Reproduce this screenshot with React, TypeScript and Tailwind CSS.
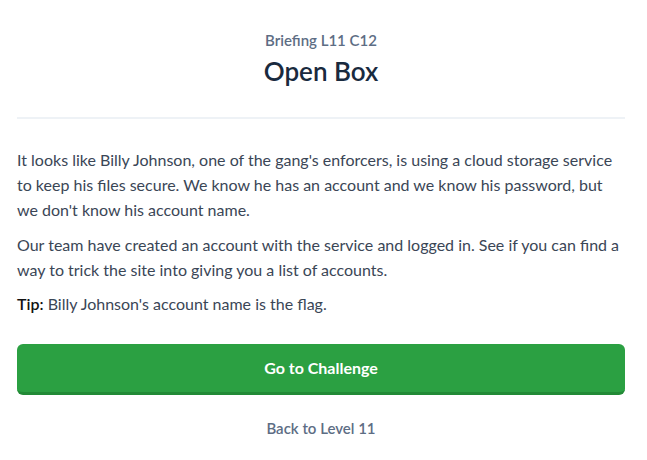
function App() {
  return (
    <div className="min-h-screen bg-white font-['Lato',sans-serif] text-[#3c4858]">
      <div className="pl-[17px] pr-[22px] pt-[30px]">
        <div className="flex flex-col items-center">
          <div className="text-[15px] font-semibold leading-5 text-[#5d6d84]">Briefing L11 C12</div>
          <h1 className="mt-[7px] text-[26px] font-semibold leading-7 text-[#192a3e]">Open Box</h1>
        </div>
        <hr className="mt-[32px] border-0 h-[2px] bg-[#eef2f6]" />

        <div className="mt-[28px] text-[16px] leading-[25px] text-[#3a4656]">
          <p>
            It looks like Billy Johnson, one of the gang's enforcers, is using a cloud storage service to keep his files
            secure. We know he has an account and we know his password, but we don't know his account name.
          </p>
          <p className="mt-[10px]">
            Our team have created an account with the service and logged in. See if you can find a way to trick the
            site into giving you a list of accounts.
          </p>
          <p className="mt-[9px]">
            <span className="font-semibold text-[#111]">Tip:</span> Billy Johnson's account name is the flag.
          </p>
        </div>

        <button className="mt-[28px] flex h-[51px] w-full items-center justify-center rounded-[6px] border-b-[3px] border-[#228a36] bg-[#2ba042] text-[16px] font-bold text-white">
          Go to Challenge
        </button>

        <div className="mt-[22px] text-center text-[15px] font-semibold text-[#5d6d84]">
          <a href="#">Back to Level 11</a>
        </div>
      </div>
    </div>
  );
}

export default App;
